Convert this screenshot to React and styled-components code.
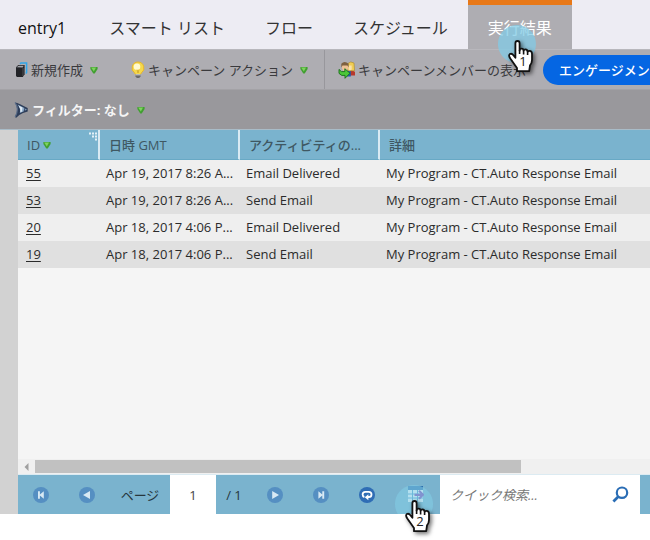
import React from "react";
import styled, { createGlobalStyle, css } from "styled-components";

const GlobalStyle = createGlobalStyle`
  *, *::before, *::after { box-sizing: border-box; }
  body {
    margin: 0;
    background: #fff;
    font-family: "Open Sans", "Noto Sans CJK JP", sans-serif;
    font-size: 13px;
    line-height: 20px;
    color: #2b2b2b;
    overflow: hidden;
  }
  button, input { font: inherit; color: inherit; }
`;

const Page = styled.div`
  display: flex;
  flex-direction: column;
  min-height: 100vh;
  padding-bottom: 26px;
`;

const PlainButton = styled.button`
  display: flex;
  align-items: center;
  flex-shrink: 0;
  padding: 0;
  border: 0;
  background: none;
  white-space: nowrap;
  cursor: pointer;
`;

const TabBar = styled.nav`
  display: flex;
  height: 49px;
  background: #edecf3;
`;

const Tab = styled(PlainButton)`
  position: relative;
  padding: 7px 20px 0;
  font-size: 16px;
  color: #333;
  ${(p) => p.$first && css`
    padding: 7px 23px 0 18px;
    color: #111;
  `}
  ${(p) => p.$active && css`
    padding-top: 2px;
    border-top: 5px solid #e87817;
    background: #aeadb2;
    color: #fff;
  `}
`;

const Toolbar = styled.div`
  display: flex;
  align-items: center;
  height: 40px;
  padding-left: 14px;
  background: #aeadb2;
  border-top: 1px solid #b8b7bc;
  overflow: hidden;
`;

const ToolButton = styled(PlainButton)`
  gap: 2px;
  margin-right: ${(p) => p.$after || 0}px;
  color: #3a3a3d;
`;

const ToolLabel = styled.span`
  margin-right: ${(p) => (p.$menu ? 5 : 0)}px;
`;

const Separator = styled.span`
  flex-shrink: 0;
  width: 1px;
  height: 100%;
  margin-right: 13px;
  background: #98979c;
`;

const PillButton = styled(PlainButton)`
  height: 30px;
  padding: 0 16px;
  border-radius: 15px;
  background: #0566e3;
  color: #fff;
  font-weight: 500;
`;

const FilterBar = styled(Toolbar)`
  background: #99989c;
  border-top-color: #a3a2a6;
`;

const FilterButton = styled(ToolButton)`
  color: #f5f5f5;
  font-weight: 700;
`;

const Panel = styled.main`
  display: flex;
  flex: 1;
  flex-direction: column;
  padding-left: 18px;
  background: #d2d2d2;
  border-top: 1px solid #a9bcc8;
`;

const GridBody = styled.div`
  flex: 1;
  background: #f5f5f5;
`;

const Grid = styled.table`
  width: 100%;
  border-collapse: separate;
  border-spacing: 0;
  table-layout: fixed;
`;

const Column = styled.col`
  width: ${(p) => p.$width};
`;

const HeadCell = styled.th`
  position: relative;
  height: 30px;
  padding: 0 9px;
  border-right: ${(p) => (p.$last ? 0 : 2)}px solid #d9eaf3;
  border-bottom: 1px solid #68a9c5;
  background: #7ab3ce;
  color: #3f5863;
  font-weight: 500;
  text-align: left;
  white-space: nowrap;
`;

const HeadLabel = styled.span`
  display: inline-flex;
  align-items: center;
  gap: 3px;
`;

const Grip = styled.svg`
  position: absolute;
  top: 2px;
  right: 0;
`;

const Row = styled.tr`
  background: #efefef;
  &:nth-child(even) { background: #e0e0e0; }
`;

const Cell = styled.td`
  height: 27px;
  padding: 0 6px 2px;
  white-space: nowrap;
  overflow: hidden;
`;

const IdCell = styled(Cell)`
  padding-left: 8px;
`;

const IdLink = styled.a`
  color: inherit;
  text-decoration: underline;
  text-underline-offset: 2px;
`;

const ScrollTrack = styled.div`
  display: flex;
  align-items: center;
  height: 15px;
  background: #f0f0f0;
`;

const ScrollArrow = styled(PlainButton)`
  width: 17px;
  justify-content: center;
`;

const ScrollRange = styled.div`
  flex: 1;
`;

const ScrollThumb = styled.div`
  width: 79%;
  height: 13px;
  background: #c1c1c1;
`;

const Pager = styled.footer`
  display: flex;
  height: 40px;
  background: #7ab3ce;
  border-top: 1px solid #dcebf2;
`;

const PagerButton = styled(PlainButton)`
  position: relative;
  justify-content: center;
  width: ${(p) => (p.$wide ? 50 : 46)}px;
`;

const PagerLabel = styled.label`
  display: flex;
  align-items: center;
  justify-content: center;
  width: 60px;
  color: #26363d;
`;

const PageInput = styled.input`
  width: 46px;
  padding: 0;
  border: 0;
  background: #fff;
  text-align: center;
  color: #444;
`;

const PageTotal = styled.span`
  display: flex;
  align-items: center;
  justify-content: center;
  width: 36px;
  color: #26363d;
`;

const SearchBox = styled.div`
  display: flex;
  flex: 1;
  min-width: 0;
  margin-right: 10px;
  padding: 0 11px 0 10px;
  background: #fff;
`;

const SearchInput = styled.input`
  flex: 1;
  min-width: 0;
  padding: 0;
  border: 0;
  outline: 0;
  background: none;
  &::placeholder {
    color: #777;
    font-style: italic;
    opacity: 1;
  }
`;

const PointerLayer = styled.svg`
  position: absolute;
  top: ${(p) => p.$top}px;
  left: ${(p) => p.$left}px;
  z-index: 2;
  overflow: visible;
  pointer-events: none;
`;

const HandGroup = styled.g`
  filter: drop-shadow(2px 2px 2px rgba(0, 0, 0, 0.55));
`;

function StepPointer({ step, top, left, clipped }) {
  return (
    <PointerLayer $top={top} $left={left} width="40" height="50" viewBox="0 0 40 50" aria-hidden="true">
      <path
        d={clipped ? "M2.8 29A19 19 0 1 1 35.2 29Z" : "M19 0A19 19 0 1 1 18.9 0Z"}
        fill="#82cbe5"
        fillOpacity={clipped ? 0.6 : 0.75}
      />
      <HandGroup>
        <path
          d="M17.4 30V18.2Q17.4 16 19.5 16T21.6 18.2V25.4Q21.7 23.7 23.6 23.7T25.6 25.7Q25.7 24.4 27.5 24.4T29.6 26.7Q29.8 25.8 31.4 25.8Q34 25.8 34 28.8V35Q34 38 32 40.3L31.2 46.2H19V43L12.3 33.6Q10.2 30.3 11.8 29.1Q13.7 27.9 15.4 30.3L17.4 32.8Z"
          fill="#fff"
          stroke="#111"
          strokeWidth="1.8"
          strokeLinejoin="round"
        />
        <path d="M21.6 25V29M25.6 25.5V29.5M29.6 26.5V30" stroke="#111" strokeWidth="1.6" />
      </HandGroup>
      <text x="25" y="41" fontSize="13" textAnchor="middle" fill="#222">{step}</text>
    </PointerLayer>
  );
}

const MenuArrow = () => (
  <svg width="8" height="8" viewBox="0 0 8 8" aria-hidden="true">
    <path d="M.4 1H7.6V3L4.7 7.4H3.3L.4 3Z" fill="#419f31" />
    <path d="M1.2 1.6H6L3.8 5.6Z" fill="#7fd35f" />
  </svg>
);

const NewIcon = () => (
  <svg width="15" height="16" viewBox="0 0 15 16" aria-hidden="true">
    <path d="M6 1.8 7 1H12.6V10.5L11.8 11.5" fill="none" stroke="#2fa5e8" strokeWidth="1.5" />
    <path d="M2 5.2 4.2 3H10.6V12.2L8.8 15H3L2 14Z" fill="#222327" />
    <path d="M2.7 5.2 4.6 3.7H9.7L8.6 5.4Z" fill="#a3a5ab" />
    <path d="M9 6V14" stroke="#5a5b60" strokeWidth=".8" />
  </svg>
);

const BulbIcon = () => (
  <svg width="16" height="18" viewBox="0 0 16 18" aria-hidden="true">
    <path d="M8 1a6 6 0 0 0-3.4 10.9L5.5 13.5h5l.9-1.6A6 6 0 0 0 8 1Z" fill="#f5d84b" stroke="#e6b62d" />
    <circle cx="7" cy="5.8" r="3.3" fill="#fffad0" />
    <path d="M7 8.5 8 12 9 8.5" fill="none" stroke="#cba12b" strokeWidth=".7" />
    <path d="M5.5 13H10.5V15.6L9.2 17H6.8L5.5 15.6Z" fill="#696969" />
    <path d="M5.5 13.8H10.5" stroke="#dedede" />
  </svg>
);

const MembersIcon = () => (
  <svg width="18" height="18" viewBox="0 0 18 18" aria-hidden="true">
    <path d="M10 10.5Q14 8.5 17 11V14.5H12Z" fill="#b8392d" />
    <path d="M8.5 10H12.8V15.5H9Z" fill="#225bb2" />
    <path d="M9.8 9.6V2.6Q12.5-.4 16 2L16.6 9.8H14Z" fill="#f0cd55" stroke="#a8842c" strokeWidth=".6" />
    <path d="M10.5 4.4H13.7V8.4L11.8 9.6 10.5 8.6Z" fill="#fae0ad" />
    <path d="M4 3.8H10V7.6Q9 10.4 7 10.2T4 7.4Z" fill="#efc294" />
    <path d="M3.3 6.4V2.8Q6.5-1 10.6 2.8V6.4L9.4 4.6H4.5Z" fill="#7d6040" />
    <path d="M1 8.4 3.4 10.6H6.8V7.7L12 12.2 7 17.3V14.4H3.8L1 12.4Z" fill="#4cc737" stroke="#176d18" strokeWidth=".9" />
  </svg>
);

const FilterIcon = () => (
  <svg width="16" height="18" viewBox="0 0 16 18" aria-hidden="true">
    <path d="M1 1.4Q5 2 13.7 7V10.6L9 12Q5 13.6 2.2 16.8L.8 16Q5.5 8.5 1 1.4Z" fill="#2d3d59" />
    <path d="M3.6 3.4 10.4 7 9.6 10.6 5.8 12Q7 7.6 3.6 3.4Z" fill="#8ca8c6" />
    <path d="M4.4 4.4 8.4 6.4 8 10.6 6.4 11.2Q7 7.8 4.4 4.4Z" fill="#dce8f2" />
    <path d="M1 1.4Q5.6 8 1.2 16" fill="none" stroke="#5d6f8b" strokeWidth="1.1" />
    <path d="M10.8 7.6 13 8.6 10.8 9.8Z" fill="#7897b8" />
  </svg>
);

const pagerShapes = {
  first: <path d="M5 4.3H6.9V7.4L10.8 4.3V11.7L6.9 8.6V11.7H5Z" fill="#d8e9f4" />,
  prev: <path d="M11 4V12L4 8Z" fill="#d8e9f4" />,
  next: <path d="M5.2 4V12L12 8Z" fill="#d8e9f4" />,
  last: <path d="M11.2 4.3H9.3V7.4L5.4 4.3V11.7L9.3 8.6V11.7H11.2Z" fill="#d8e9f4" />,
  refresh: (
    <g>
      <path d="M5.4 10Q3.6 9.6 3.6 7.5Q3.6 4.8 6.4 4.8H9.8Q12.5 4.8 12.5 7.4T9.8 10H8.5" fill="none" stroke="#fff" strokeWidth="1.8" />
      <path d="M9.4 7.2V13.2L5.8 10.2Z" fill="#fff" />
    </g>
  ),
};

const PagerIcon = ({ shape }) => (
  <svg width="16" height="16" viewBox="0 0 16 16" aria-hidden="true">
    <circle cx="8" cy="8" r="8" fill={shape === "refresh" ? "#2f6db5" : "#558fc2"} />
    {pagerShapes[shape]}
  </svg>
);

const ExportIcon = () => (
  <svg width="17" height="17" viewBox="0 0 17 17" aria-hidden="true">
    <path d="M1 0H16V16H1Z" fill="#fff" />
    <path d="M1 0H16V4H1Z" fill="#2c6fae" />
    <path d="M1 8H16M1 12H16M5.5 4V16M10.5 4V16" stroke="#4b9ccb" />
    <path d="M7.5 8.8H15M12 4.8 16 8.8 12 12.8" fill="none" stroke="#7f3fb0" strokeWidth="2.2" />
  </svg>
);

const SearchIcon = () => (
  <svg width="17" height="17" viewBox="0 0 17 17" aria-hidden="true">
    <circle cx="10" cy="6.7" r="5.2" fill="none" stroke="#2a6db5" strokeWidth="2.2" />
    <path d="M6.4 10.4 1.4 15.4" stroke="#2a6db5" strokeWidth="2.8" />
  </svg>
);

const tabs = ["スマート リスト", "フロー", "スケジュール"];

const rows = [
  ["55", "Apr 19, 2017 8:26 A...", "Email Delivered"],
  ["53", "Apr 19, 2017 8:26 A...", "Send Email"],
  ["20", "Apr 18, 2017 4:06 P...", "Email Delivered"],
  ["19", "Apr 18, 2017 4:06 P...", "Send Email"],
];

export default function App() {
  return (
    <>
      <GlobalStyle />
      <Page>
        <TabBar>
          <Tab $first>entry1</Tab>
          {tabs.map((name) => <Tab key={name}>{name}</Tab>)}
          <Tab $active aria-current="page">
            実行結果
            <StepPointer step="1" top={20} left={30} />
          </Tab>
        </TabBar>
        <Toolbar>
          <ToolButton $after={32}>
            <NewIcon />
            <ToolLabel $menu>新規作成</ToolLabel>
            <MenuArrow />
          </ToolButton>
          <ToolButton $after={16}>
            <BulbIcon />
            <ToolLabel $menu>キャンペーン アクション</ToolLabel>
            <MenuArrow />
          </ToolButton>
          <Separator />
          <ToolButton $after={17}>
            <MembersIcon />
            <ToolLabel>キャンペーンメンバーの表示</ToolLabel>
          </ToolButton>
          <PillButton>エンゲージメント</PillButton>
        </Toolbar>
        <FilterBar>
          <FilterButton>
            <FilterIcon />
            <ToolLabel $menu>フィルター: なし</ToolLabel>
            <MenuArrow />
          </FilterButton>
        </FilterBar>
        <Panel>
          <GridBody>
            <Grid>
              <colgroup>
                <Column $width="82px" />
                <Column $width="140px" />
                <Column $width="140px" />
                <Column $width="auto" />
              </colgroup>
              <thead>
                <tr>
                  <HeadCell>
                    <HeadLabel>ID <MenuArrow /></HeadLabel>
                    <Grip width="10" height="9" viewBox="0 0 10 9" aria-hidden="true">
                      <path d="M1 1.5H9M4 4.5H9M7 7.5H9" stroke="#e4f1f7" strokeWidth="2" strokeDasharray="2 1" />
                    </Grip>
                  </HeadCell>
                  <HeadCell>日時 GMT</HeadCell>
                  <HeadCell>アクティビティの...</HeadCell>
                  <HeadCell $last>詳細</HeadCell>
                </tr>
              </thead>
              <tbody>
                {rows.map(([id, date, type]) => (
                  <Row key={id}>
                    <IdCell><IdLink href={`#${id}`}>{id}</IdLink></IdCell>
                    <Cell>{date}</Cell>
                    <Cell>{type}</Cell>
                    <Cell>My Program - CT.Auto Response Email</Cell>
                  </Row>
                ))}
              </tbody>
            </Grid>
          </GridBody>
          <ScrollTrack>
            <ScrollArrow aria-label="左へスクロール">
              <svg width="5" height="8" viewBox="0 0 5 8" aria-hidden="true">
                <path d="M4.5 0V8L.5 4Z" fill="#a0a0a0" />
              </svg>
            </ScrollArrow>
            <ScrollRange><ScrollThumb /></ScrollRange>
          </ScrollTrack>
          <Pager>
            <PagerButton aria-label="最初"><PagerIcon shape="first" /></PagerButton>
            <PagerButton aria-label="前"><PagerIcon shape="prev" /></PagerButton>
            <PagerLabel htmlFor="page">ページ</PagerLabel>
            <PageInput id="page" defaultValue="1" />
            <PageTotal>/ 1</PageTotal>
            <PagerButton aria-label="次"><PagerIcon shape="next" /></PagerButton>
            <PagerButton aria-label="最後"><PagerIcon shape="last" /></PagerButton>
            <PagerButton aria-label="更新"><PagerIcon shape="refresh" /></PagerButton>
            <PagerButton $wide aria-label="エクスポート">
              <ExportIcon />
              <StepPointer step="2" top={10} left={5} clipped />
            </PagerButton>
            <SearchBox>
              <SearchInput aria-label="クイック検索" placeholder="クイック検索..." />
              <PlainButton aria-label="検索"><SearchIcon /></PlainButton>
            </SearchBox>
          </Pager>
        </Panel>
      </Page>
    </>
  );
}
